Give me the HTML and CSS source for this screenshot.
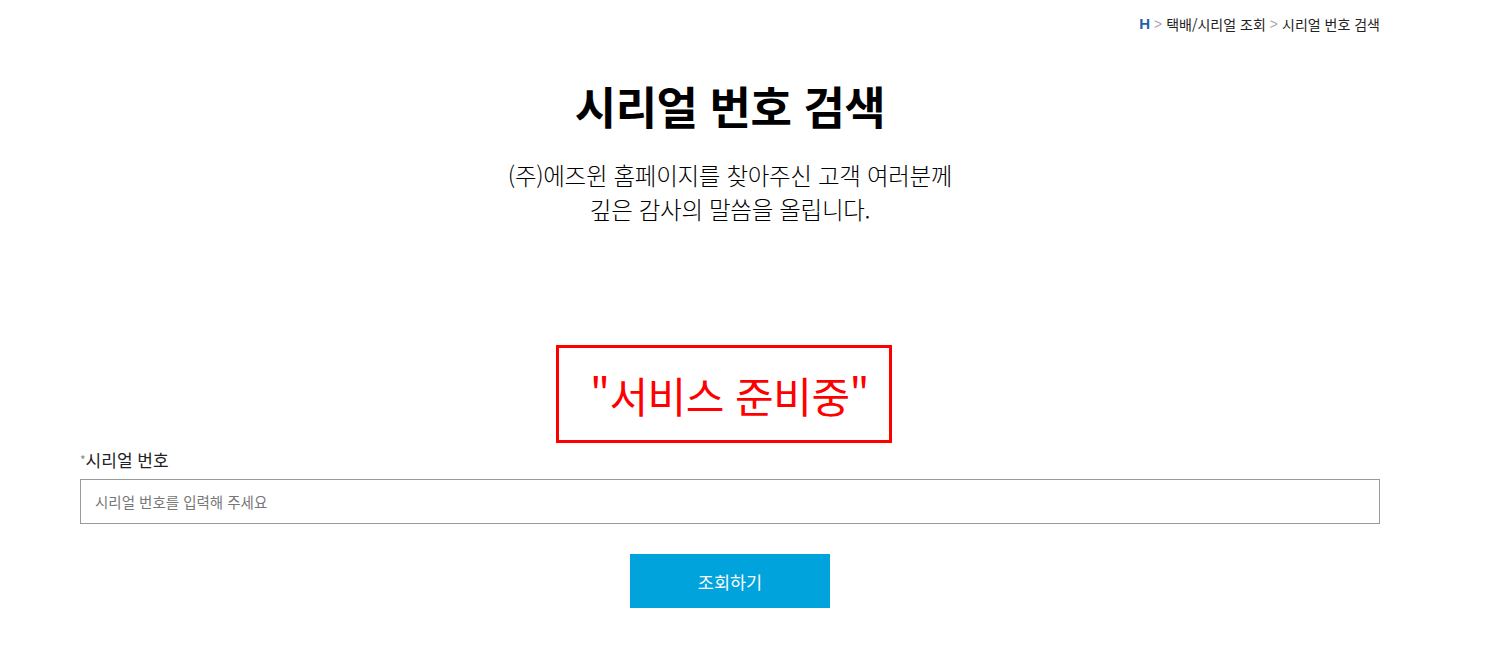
FILE: index.html
```html
<!DOCTYPE html>
<html lang="ko">
<head>
    <meta charset="UTF-8">
    <meta name="viewport" content="width=device-width, initial-scale=1.0">
    <title>시리얼 번호 검색</title>
    <link rel="stylesheet" href="styles.css">
</head>
<body>
    <div class="container">
        <div class="breadcrumb">
            <span class="home">H</span>
            <span class="sep">&gt;</span>
            <span>택배/시리얼 조회</span>
            <span class="sep">&gt;</span>
            <span>시리얼 번호 검색</span>
        </div>

        <h2 class="page-title">시리얼 번호 검색</h2>
        <p class="intro">(주)에즈윈 홈페이지를 찾아주신 고객 여러분께<br>깊은 감사의 말씀을 올립니다.</p>

        <div class="notice-wrap">
            <div class="notice">"서비스 준비중"</div>
        </div>

        <form class="search-form" onsubmit="return false;">
            <label class="field-label" for="serial"><span class="req">*</span>시리얼 번호</label>
            <input id="serial" class="field-input" type="text" placeholder="시리얼 번호를 입력해 주세요">
            <div class="button-row">
                <button class="button" type="submit">조회하기</button>
            </div>
        </form>
    </div>
</body>
</html>
```

FILE: styles.css
```css
body {
    margin: 0;
    font-family: "Noto Sans CJK KR", "Noto Sans", sans-serif;
    color: #111;
    background: #fff;
}
.container {
    width: 1300px;
    margin: 0 0 0 80px;
}
.breadcrumb {
    display: flex;
    justify-content: flex-end;
    gap: 4px;
    padding-top: 14px;
    font-size: 14px;
    line-height: 20px;
    color: #222;
}
.breadcrumb .home {
    color: #1f5fa8;
    font-weight: bold;
    font-family: "Liberation Sans", sans-serif;
    font-size: 15px;
}
.breadcrumb .sep {
    color: #aaa;
    font-family: "Liberation Sans", sans-serif;
}
.page-title {
    margin: 42px 0 0;
    text-align: center;
    font-size: 45px;
    line-height: 60px;
    font-weight: bold;
    color: #000;
    letter-spacing: -0.5px;
}
.intro {
    margin: 22px 0 0;
    text-align: center;
    font-size: 23.5px;
    line-height: 34px;
    font-weight: 300;
    color: #000;
    letter-spacing: -0.3px;
}
.notice-wrap {
    display: flex;
    justify-content: center;
    margin-top: 119px;
}
.notice {
    box-sizing: border-box;
    width: 336px;
    height: 98px;
    margin-right: 13px;
    padding-left: 12px;
    border: 3px solid #ff0000;
    display: flex;
    align-items: center;
    justify-content: center;
    color: #ff0000;
    font-size: 42px;
    letter-spacing: -0.5px;
}
.search-form {
    margin-top: 3px;
}
.field-label {
    display: block;
    font-size: 17px;
    line-height: 28px;
    color: #222;
    margin-bottom: 5px;
}
.field-label .req {
    color: #7a8aa0;
    font-size: 12px;
    vertical-align: 2px;
}
.field-input {
    box-sizing: border-box;
    display: block;
    width: 100%;
    height: 45px;
    padding: 0 14px;
    border: 1px solid #999;
    border-radius: 0;
    font-family: inherit;
    font-size: 14.5px;
    outline: none;
}
.field-input::placeholder {
    color: #777;
}
.button-row {
    display: flex;
    justify-content: center;
    margin-top: 30px;
}
.button {
    width: 200px;
    height: 54px;
    border: none;
    background-color: #00a3dc;
    color: #fff;
    font-family: inherit;
    font-size: 17.5px;
    cursor: pointer;
}
.button:hover {
    background-color: #0090c4;
}
```
